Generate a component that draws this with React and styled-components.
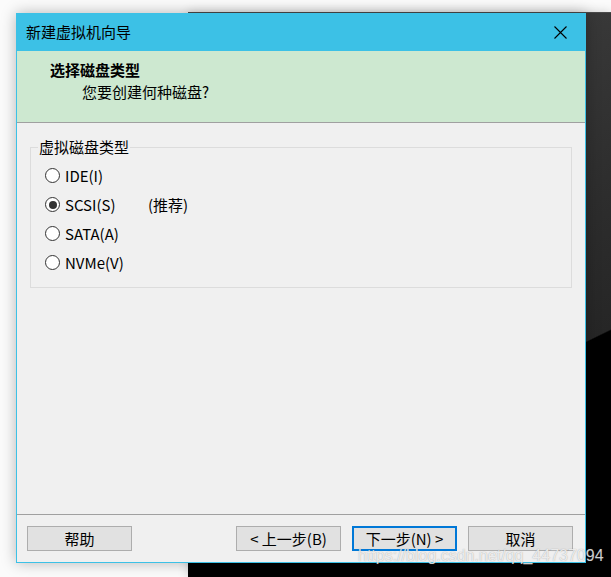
import React, { useState } from 'react';
import styled, { createGlobalStyle } from 'styled-components';

const GlobalStyle = createGlobalStyle`
  html, body {
    margin: 0;
    padding: 0;
    background: #fbfbfb;
  }
  * {
    box-sizing: border-box;
  }
`;

const Desktop = styled.div`
  position: relative;
  width: 611px;
  height: 577px;
  overflow: hidden;
  background: #fbfbfb;
  font-family: "Noto Sans CJK SC", "Noto Sans", sans-serif;
  font-size: 15px;
  color: #000;
`;

const BackWindow = styled.div`
  position: absolute;
  left: 188px;
  top: 12px;
  right: 0;
  bottom: 0;
  border-top: 1px solid #4a4a4a;
  background: linear-gradient(154deg, #444 0%, #2d2d2d 50%, #262626 67.8%, #000 68%, #000 100%);
  box-shadow: 0 0 10px rgba(0, 0, 0, 0.18);
`;

const Dialog = styled.div`
  position: absolute;
  left: 16px;
  top: 13px;
  width: 570px;
  height: 550px;
  display: flex;
  flex-direction: column;
  border: 1px solid #3cc1e6;
  border-top: none;
  background: #f0f0f0;
  box-shadow: 0 0 14px rgba(0, 0, 0, 0.28);
`;

const TitleBar = styled.div`
  height: 38px;
  margin: 0 -1px;
  padding: 0 10px 0 10px;
  display: flex;
  align-items: center;
  justify-content: space-between;
  background: #3cc1e6;
  color: #000;
  line-height: 20px;
`;

const CloseButton = styled.button`
  width: 24px;
  height: 24px;
  margin-right: 4px;
  padding: 0;
  border: none;
  background: transparent;
  display: flex;
  align-items: center;
  justify-content: center;
`;

const Header = styled.div`
  height: 72px;
  padding: 8px 0 0 33px;
  background: #cde8d0;
  border-bottom: 1px solid #a0a0a0;
`;

const HeaderTitle = styled.div`
  font-weight: bold;
  line-height: 22px;
`;

const HeaderSub = styled.div`
  padding-left: 32px;
  line-height: 22px;
`;

const Body = styled.div`
  flex: 1;
  padding: 14px 13px 0 13px;
  border-bottom: 1px solid #a0a0a0;
`;

const Group = styled.fieldset`
  margin: 0;
  padding: 4px 0 10px 14px;
  border: 1px solid #dcdcdc;
  min-width: 0;
`;

const Legend = styled.legend`
  margin-left: -7px;
  padding: 0 1px;
  line-height: 20px;
`;

const OptionRow = styled.label`
  height: 29px;
  display: flex;
  align-items: center;
  cursor: default;
`;

const RadioCircle = styled.span`
  width: 15px;
  height: 15px;
  margin-right: 5px;
  border: 1px solid #333;
  border-radius: 50%;
  background: #fff;
  display: flex;
  align-items: center;
  justify-content: center;

  &::after {
    content: '';
    width: 8px;
    height: 8px;
    border-radius: 50%;
    background: ${({ checked }) => (checked ? '#333' : 'transparent')};
  }
`;

const OptionText = styled.span`
  width: 83px;
  line-height: 20px;
`;

const Note = styled.span`
  line-height: 20px;
`;

const Footer = styled.div`
  height: 47px;
  padding: 11px 12px 0 10px;
  display: flex;
  align-items: flex-start;
  justify-content: space-between;
`;

const ButtonGroup = styled.div`
  display: flex;
  gap: 11px;
`;

const Button = styled.button`
  width: 105px;
  height: 25px;
  padding: 0;
  font-family: inherit;
  font-size: 15px;
  line-height: 20px;
  color: #000;
  background: #e1e1e1;
  border: ${({ focused }) => (focused ? '2px solid #0078d7' : '1px solid #adadad')};
  display: flex;
  align-items: center;
  justify-content: center;
`;

const Watermark = styled.div`
  position: absolute;
  left: 358px;
  top: 547px;
  font-family: "Liberation Sans", Arial, sans-serif;
  font-size: 16px;
  line-height: 18px;
  color: rgba(255, 255, 255, 0.78);
  text-shadow: 0 0 1px rgba(90, 90, 90, 0.55);
  white-space: nowrap;
  pointer-events: none;
`;

const options = [
  { key: 'ide', label: 'IDE(I)' },
  { key: 'scsi', label: 'SCSI(S)', note: '(推荐)' },
  { key: 'sata', label: 'SATA(A)' },
  { key: 'nvme', label: 'NVMe(V)' },
];

export default function App() {
  const [selected, setSelected] = useState('scsi');

  return (
    <>
      <GlobalStyle />
      <Desktop>
        <BackWindow />
        <Dialog>
          <TitleBar>
            <span>新建虚拟机向导</span>
            <CloseButton aria-label="close">
              <svg width="13" height="13" viewBox="0 0 13 13">
                <path d="M0.5 0.5 L12.5 12.5 M12.5 0.5 L0.5 12.5" stroke="#000" strokeWidth="1.1" fill="none" />
              </svg>
            </CloseButton>
          </TitleBar>
          <Header>
            <HeaderTitle>选择磁盘类型</HeaderTitle>
            <HeaderSub>您要创建何种磁盘?</HeaderSub>
          </Header>
          <Body>
            <Group>
              <Legend>虚拟磁盘类型</Legend>
              {options.map((o) => (
                <OptionRow key={o.key} onClick={() => setSelected(o.key)}>
                  <RadioCircle checked={selected === o.key} />
                  <OptionText>{o.label}</OptionText>
                  {o.note && <Note>{o.note}</Note>}
                </OptionRow>
              ))}
            </Group>
          </Body>
          <Footer>
            <Button>帮助</Button>
            <ButtonGroup>
              <Button>&lt; 上一步(B)</Button>
              <Button focused>下一步(N) &gt;</Button>
              <Button>取消</Button>
            </ButtonGroup>
          </Footer>
        </Dialog>
        <Watermark>https://blog.csdn.net/qq_44737094</Watermark>
      </Desktop>
    </>
  );
}
